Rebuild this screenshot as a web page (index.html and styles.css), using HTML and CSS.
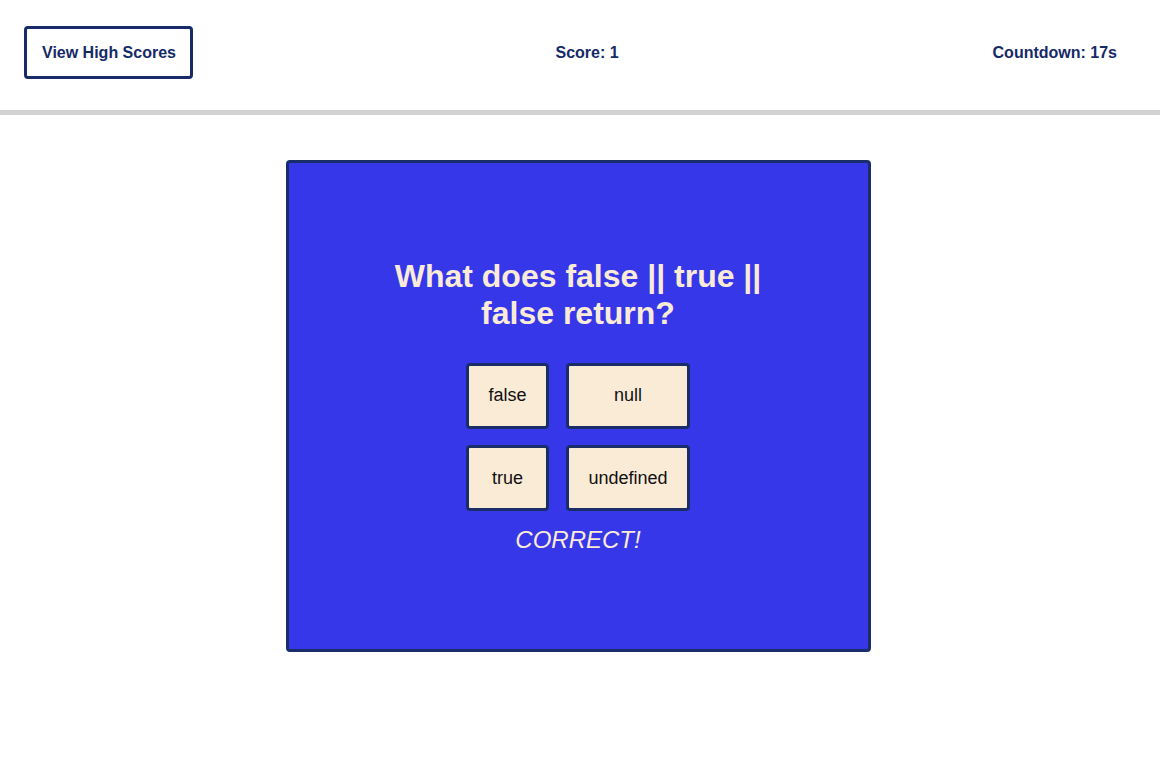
FILE: index.html
```html
<!DOCTYPE html>
<html lang="en">
<head>
<meta charset="utf-8">
<title>Code Quiz</title>
<link rel="stylesheet" href="styles.css">
</head>
<body>
<header class="topbar">
  <button class="hs-btn">View High Scores</button>
  <div class="score">Score: 1</div>
  <div class="countdown">Countdown: 17s</div>
</header>
<main class="stage">
  <section class="card">
    <h2 class="question">What does false || true || false return?</h2>
    <div class="answers">
      <button class="answer">false</button>
      <button class="answer">null</button>
      <button class="answer">true</button>
      <button class="answer">undefined</button>
    </div>
    <p class="result">CORRECT!</p>
  </section>
</main>
</body>
</html>
```
FILE: styles.css
```css
* { box-sizing: border-box; }
html, body {
  margin: 0;
  padding: 0;
  background: #ffffff;
  font-family: "Liberation Sans", Arial, sans-serif;
}
.topbar {
  display: flex;
  align-items: center;
  justify-content: space-between;
  padding: 26px 43px 31px 24px;
  border-bottom: 5px solid #d3d3d3;
  color: #162a66;
  font-weight: bold;
  font-size: 16px;
}
.hs-btn {
  font-family: inherit;
  font-weight: bold;
  font-size: 16px;
  color: #162a66;
  background: #ffffff;
  border: 3px solid #182b69;
  border-radius: 4px;
  padding: 14.5px 14.5px 14.5px 15px;
  line-height: normal;
}
.score { margin-right: 12px; }
.stage {
  display: flex;
  justify-content: center;
  padding-top: 45px;
  padding-right: 4px;
}
.card {
  width: 585px;
  height: 492px;
  background: #3737ea;
  border: 3px solid #1b2d69;
  border-radius: 4px;
  display: flex;
  flex-direction: column;
  align-items: center;
  justify-content: center;
}
.question {
  margin: 0 0 31px;
  max-width: 400px;
  text-align: center;
  font-size: 32px;
  font-weight: bold;
  line-height: normal;
  color: #faebd7;
}
.answers {
  display: grid;
  grid-template-columns: auto auto;
  gap: 16px 17px;
}
.answer {
  font-family: inherit;
  font-size: 18px;
  line-height: normal;
  color: #111111;
  background: #faebd7;
  border: 3px solid #1b2d69;
  border-radius: 4px;
  padding: 19.6px 19.5px;
}
.result {
  margin: 15px 0 0;
  font-size: 24px;
  font-style: italic;
  line-height: normal;
  color: #faebd7;
}
```
